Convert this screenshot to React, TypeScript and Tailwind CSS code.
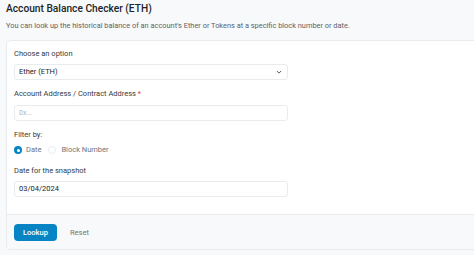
export default function App() {
  return (
    <div
      className="min-h-screen bg-[#f8f9fa] text-[#212529]"
      style={{ fontFamily: 'Roboto, "Liberation Sans", sans-serif' }}
    >
      <div className="px-[6px] pt-[2px]">
        <h1 className="text-[10.2px] font-medium leading-[14px] text-[#212529]">Account Balance Checker (ETH)</h1>
        <p className="mt-[4px] text-[7.4px] leading-[11px] text-[#5c636a]">
          You can look up the historical balance of an account's Ether or Tokens at a specific block number or date.
        </p>
      </div>

      <div className="ml-[6px] mt-[9px] -mr-[10px] rounded-l-[5px] border border-[#e9ecef] bg-white">
        <div className="px-[7px] pt-[8px] pb-[17px] text-[7.5px]">
          <label className="block leading-[10px] text-[#343a40]">Choose an option</label>
          <div className="mt-[5px] flex h-[16px] w-[274px] items-center justify-between rounded-[3px] border border-[#e9ecef] px-[4px]">
            <span className="text-[#212529]">Ether (ETH)</span>
            <svg width="6" height="6" viewBox="0 0 16 16" fill="none" stroke="#343a40" strokeWidth="2.2" strokeLinecap="round" strokeLinejoin="round" className="mr-[1px]">
              <path d="M3 6l5 5 5-5" />
            </svg>
          </div>

          <label className="mt-[9px] block leading-[10px] text-[#343a40]">
            Account Address / Contract Address <span className="text-[#dc3545]">*</span>
          </label>
          <div className="mt-[6px] flex h-[16px] w-[274px] items-center rounded-[3px] border border-[#e9ecef] px-[4px]">
            <span className="text-[7px] text-[#adb5bd]">0x...</span>
          </div>

          <label className="mt-[9px] block leading-[10px] text-[#343a40]">Filter by:</label>
          <div className="mt-[5px] flex items-center gap-[4px] leading-[10px]">
            <div className="flex items-center gap-[4px]">
              <span className="flex h-[8px] w-[8px] items-center justify-center rounded-full bg-[#0784c3]">
                <span className="h-[3px] w-[3px] rounded-full bg-white" />
              </span>
              <span className="text-[#6c757d]">Date</span>
            </div>
            <div className="ml-[3px] flex items-center gap-[5px]">
              <span className="h-[8px] w-[8px] rounded-full border border-[#e9ecef] bg-white" />
              <span className="text-[#6c757d]">Block Number</span>
            </div>
          </div>

          <label className="mt-[11px] block leading-[10px] text-[#343a40]">Date for the snapshot</label>
          <div className="mt-[5px] flex h-[16px] w-[274px] items-center rounded-[3px] border border-[#e9ecef] px-[4px]">
            <span className="text-[#212529]">03/04/2024</span>
          </div>
        </div>

        <div className="flex items-center gap-[13px] rounded-bl-[5px] border-t border-[#e9ecef] bg-[#f8f9fa] px-[7px] pt-[9px] pb-[8px]">
          <button className="h-[17px] w-[43px] rounded-[4px] bg-[#0784c3] text-[7.5px] font-medium text-white">
            Lookup
          </button>
          <button className="text-[7.5px] text-[#6c757d]">Reset</button>
        </div>
      </div>
    </div>
  );
}
